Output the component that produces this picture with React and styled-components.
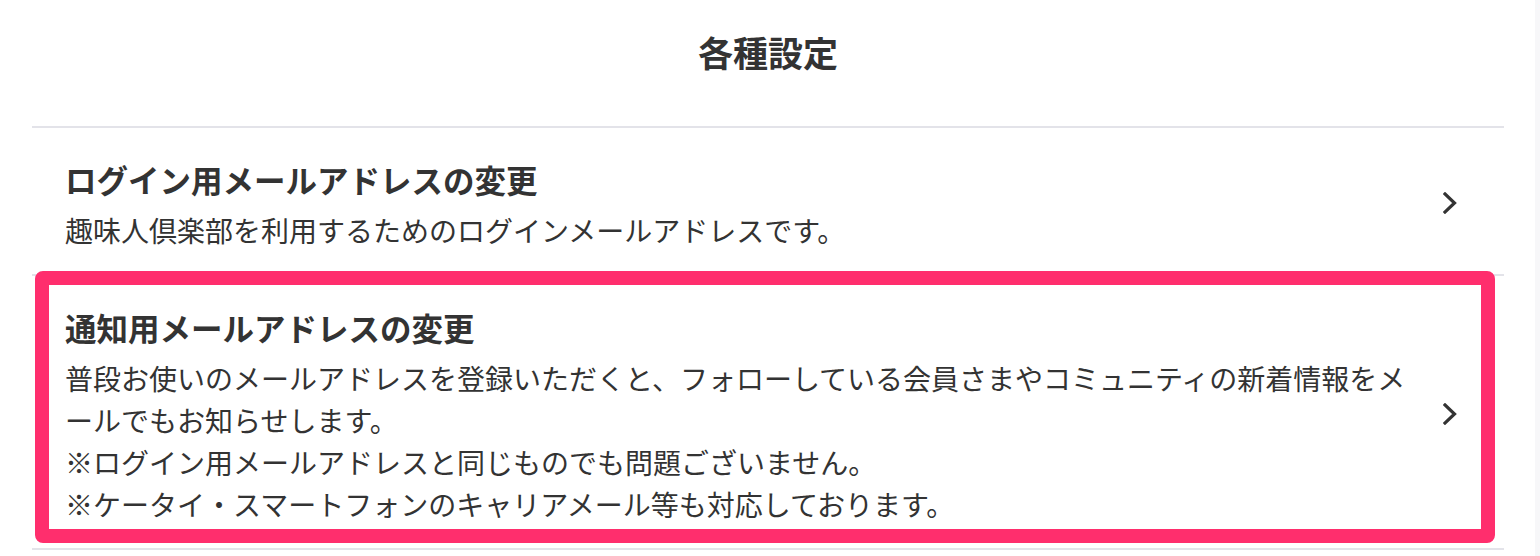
import React from 'react';
import styled, { createGlobalStyle } from 'styled-components';

const GlobalStyle = createGlobalStyle`
  html, body {
    margin: 0;
    padding: 0;
    background: #fff;
  }
  body {
    font-family: "Noto Sans CJK JP", "Noto Sans", sans-serif;
    color: #333;
  }
`;

const Page = styled.div`
  display: flex;
  width: 1540px;
  min-height: 556px;
`;

const Main = styled.main`
  flex: 1;
  padding: 0 31px 0 32px;
`;

const ScrollTrack = styled.div`
  width: 5px;
  background: #f7f7f9;
`;

const Header = styled.header`
  height: 128px;
  box-sizing: border-box;
  padding-top: 27px;
  border-bottom: 2px solid #e3e3e9;
  text-align: center;
`;

const PageTitle = styled.h1`
  margin: 0;
  font-size: 35px;
  line-height: 50px;
  font-weight: 700;
  color: #333;
`;

const List = styled.ul`
  list-style: none;
  margin: 0;
  padding: 0;
`;

const Item = styled.li`
  position: relative;
  display: flex;
  align-items: center;
  gap: 28px;
  padding: 27px 47px 23px 33px;
  border-bottom: 2px solid #e3e3e9;
  cursor: pointer;
`;

const Body = styled.div`
  flex: 1;
  min-width: 0;
`;

const ItemTitle = styled.h2`
  margin: 0 0 6px;
  font-size: 31.5px;
  line-height: 48px;
  font-weight: 700;
  color: #333;
`;

const Desc = styled.p`
  margin: 0;
  font-size: 28px;
  line-height: 42px;
  color: #333;
`;

const Highlight = styled.div`
  position: absolute;
  top: -5px;
  bottom: 5px;
  left: 3px;
  right: 9px;
  border: 14px solid #ff2e6d;
  border-radius: 8px;
  pointer-events: none;
`;

const Chevron = () => (
  <svg width="14" height="22" viewBox="0 0 14 22" fill="none">
    <polyline
      points="2,2 11.5,11 2,20"
      stroke="#333"
      strokeWidth="3.2"
      strokeLinecap="square"
      strokeLinejoin="miter"
    />
  </svg>
);

const items = [
  {
    title: 'ログイン用メールアドレスの変更',
    lines: ['趣味人倶楽部を利用するためのログインメールアドレスです。']
  },
  {
    title: '通知用メールアドレスの変更',
    lines: [
      '普段お使いのメールアドレスを登録いただくと、フォローしている会員さまやコミュニティの新着情報をメールでもお知らせします。',
      '※ログイン用メールアドレスと同じものでも問題ございません。',
      '※ケータイ・スマートフォンのキャリアメール等も対応しております。'
    ],
    highlighted: true
  }
];

export default function App() {
  return (
    <Page>
      <GlobalStyle />
      <Main>
        <Header>
          <PageTitle>各種設定</PageTitle>
        </Header>
        <List>
          {items.map((item) => (
            <Item key={item.title}>
              <Body>
                <ItemTitle>{item.title}</ItemTitle>
                {item.lines.map((line) => (
                  <Desc key={line}>{line}</Desc>
                ))}
              </Body>
              <Chevron />
              {item.highlighted && <Highlight />}
            </Item>
          ))}
        </List>
      </Main>
      <ScrollTrack />
    </Page>
  );
}
